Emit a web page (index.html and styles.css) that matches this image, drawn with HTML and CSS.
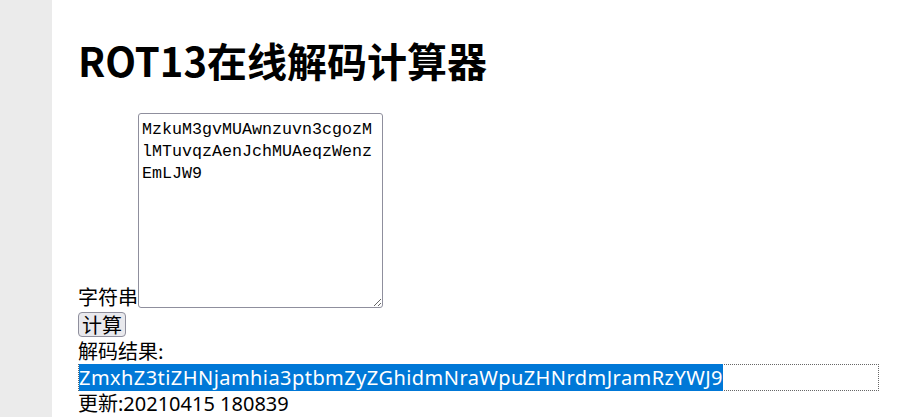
FILE: index.html
```html
<!DOCTYPE html>
<html lang="zh-CN">
<head>
<meta charset="utf-8">
<title>ROT13在线解码计算器</title>
<link rel="stylesheet" href="styles.css">
</head>
<body>
<main class="page">
  <h1 class="title">ROT13在线解码计算器</h1>
  <form class="calc">
    <div class="row-input"><label class="label" for="src">字符串</label><textarea id="src" class="src">MzkuM3gvMUAwnzuvn3cgozMlMTuvqzAenJchMUAeqzWenzEmLJW9</textarea></div>
    <div class="row-btn"><button type="button" class="btn">计算</button></div>
  </form>
  <div class="result-label">解码结果:</div>
  <div class="result"><span class="sel">ZmxhZ3tiZHNjamhia3ptbmZyZGhidmNraWpuZHNrdmJramRzYWJ9</span></div>
  <div class="updated">更新:20210415 180839</div>
</main>
</body>
</html>
```

FILE: styles.css
```css
html, body {
  margin: 0;
  padding: 0;
}
body {
  background: #ebebeb;
  font-family: "Noto Sans", "Noto Sans CJK SC", sans-serif;
  font-size: 20px;
  color: #000;
}
.page {
  margin-left: 52px;
  background: #fff;
  min-height: 417px;
  padding: 1px 33px 0 26px;
}
.title {
  font-family: "Noto Sans CJK SC", sans-serif;
  font-size: 40px;
  font-weight: 700;
  line-height: 50px;
  margin: 34px 0 28px;
}
.calc {
  margin: 0;
}
.row-input {
  line-height: 20px;
}
.label {
  font-family: "Noto Sans CJK SC", sans-serif;
}
.src {
  display: inline-block;
  vertical-align: bottom;
  box-sizing: border-box;
  width: 245px;
  height: 195px;
  margin: 0;
  padding: 5px 3px 2px;
  border: 1px solid #8f8f9d;
  border-radius: 3px;
  font-family: "Liberation Mono", monospace;
  font-size: 16.67px;
  line-height: 22px;
  color: #000;
  word-break: break-all;
}
.row-btn {
  padding-top: 4px;
  line-height: 0;
}
.btn {
  font-family: "Noto Sans CJK SC", sans-serif;
  font-size: 20px;
  line-height: 21px;
  height: 25px;
  padding: 0 3px;
  margin: 0;
  background: #e9e9ed;
  border: 1px solid #8f8f9d;
  border-radius: 4px;
  color: #000;
}
.result-label {
  font-family: "Noto Sans CJK SC", sans-serif;
  line-height: 27px;
}
.result {
  border: 1px dotted #666;
  line-height: 25px;
  height: 25px;
  white-space: nowrap;
}
.sel {
  background: #0078d7;
  color: #fff;
  letter-spacing: 0.44px;
}
.updated {
  line-height: 25px;
}
```
